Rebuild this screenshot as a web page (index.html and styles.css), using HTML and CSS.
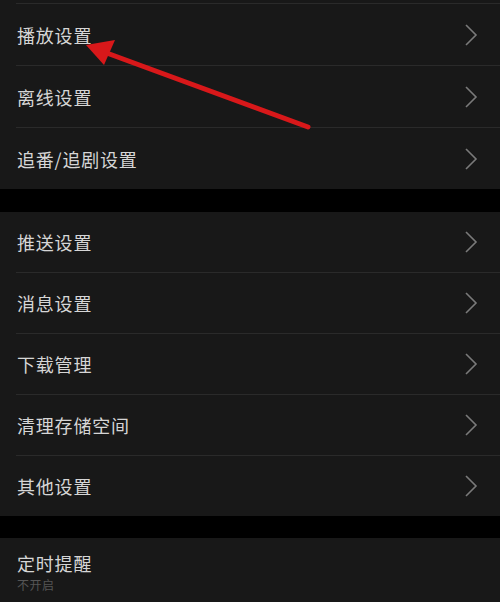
FILE: index.html
```html
<!DOCTYPE html>
<html lang="zh-CN">
<head>
<meta charset="utf-8">
<title>设置</title>
<link rel="stylesheet" href="styles.css">
</head>
<body>
<div class="page">
  <section class="group group-first">
    <div class="row tall"><span class="label">播放设置</span><svg class="chev" viewBox="0 0 14 22"><path d="M2 1 L12 11 L2 21"/></svg></div>
    <div class="row tall"><span class="label">离线设置</span><svg class="chev" viewBox="0 0 14 22"><path d="M2 1 L12 11 L2 21"/></svg></div>
    <div class="row tall"><span class="label">追番/追剧设置</span><svg class="chev" viewBox="0 0 14 22"><path d="M2 1 L12 11 L2 21"/></svg></div>
  </section>
  <section class="group group-second">
    <div class="row"><span class="label">推送设置</span><svg class="chev" viewBox="0 0 14 22"><path d="M2 1 L12 11 L2 21"/></svg></div>
    <div class="row"><span class="label">消息设置</span><svg class="chev" viewBox="0 0 14 22"><path d="M2 1 L12 11 L2 21"/></svg></div>
    <div class="row"><span class="label">下载管理</span><svg class="chev" viewBox="0 0 14 22"><path d="M2 1 L12 11 L2 21"/></svg></div>
    <div class="row"><span class="label">清理存储空间</span><svg class="chev" viewBox="0 0 14 22"><path d="M2 1 L12 11 L2 21"/></svg></div>
    <div class="row"><span class="label">其他设置</span><svg class="chev" viewBox="0 0 14 22"><path d="M2 1 L12 11 L2 21"/></svg></div>
  </section>
  <section class="group group-third">
    <div class="row-two">
      <span class="title">定时提醒</span>
      <span class="sub">不开启</span>
    </div>
  </section>
  <svg class="arrow" viewBox="0 0 500 602" width="500" height="602">
    <line x1="308" y1="127" x2="104" y2="52" />
    <polygon points="86,45 115,40 104,65" />
  </svg>
</div>
</body>
</html>
```
FILE: styles.css
```css
html, body {
  margin: 0;
  padding: 0;
  background: #000;
}
.page {
  position: relative;
  width: 500px;
  height: 602px;
  overflow: hidden;
  font-family: "Noto Sans CJK SC", "Noto Sans", sans-serif;
  display: flex;
  flex-direction: column;
}
.group {
  background: #181818;
  display: flex;
  flex-direction: column;
}
.group-first {
  padding-top: 3px;
}
.group-second {
  margin-top: 23px;
}
.group-third {
  margin-top: 22px;
  flex: 1;
}
.row {
  height: 60px;
  display: flex;
  align-items: center;
  justify-content: space-between;
  padding: 0 22px 0 17px;
  position: relative;
}
.row.tall {
  height: 61px;
}
.row + .row,
.group-first .row:first-child {
  border-top: 1px solid #2a2a2a;
  margin-left: 16px;
  padding-left: 1px;
}
.label {
  font-size: 18px;
  letter-spacing: 0.8px;
  color: #d6d6d6;
  line-height: 22px;
}
.chev {
  width: 14px;
  height: 22px;
  fill: none;
  stroke: #7a7a7a;
  stroke-width: 1.6;
}
.row-two {
  display: flex;
  flex-direction: column;
  align-items: flex-start;
  padding: 12px 17px 0;
}
.title {
  display: block;
  font-size: 18px;
  letter-spacing: 0.8px;
  color: #d6d6d6;
  line-height: 26px;
  height: 26px;
}
.sub {
  display: block;
  font-size: 12px;
  line-height: 18px;
  height: 18px;
  color: #555;
  letter-spacing: 0.5px;
}
.arrow {
  position: absolute;
  left: 0;
  top: 0;
  pointer-events: none;
}
.arrow line {
  stroke: #d8181a;
  stroke-width: 5;
  stroke-linecap: round;
}
.arrow polygon {
  fill: #d8181a;
}
```
